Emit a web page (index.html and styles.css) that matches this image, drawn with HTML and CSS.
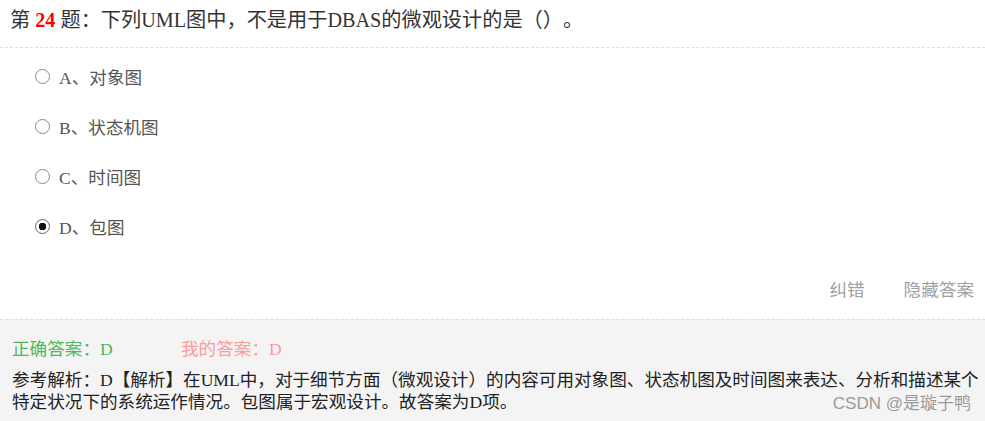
FILE: index.html
```html
<!DOCTYPE html>
<html lang="zh-CN">
<head>
  <meta charset="UTF-8" />
  <title>第24题</title>
  <link rel="stylesheet" href="styles.css">
</head>
<body>

  <div class="question">
    第 <span class="num">24</span> 题：下列UML图中，不是用于DBAS的微观设计的是（）。
  </div>

  <div class="options">
    <label class="option"><input type="radio" name="q24"> A、对象图</label>
    <label class="option"><input type="radio" name="q24"> B、状态机图</label>
    <label class="option"><input type="radio" name="q24"> C、时间图</label>
    <label class="option"><input type="radio" name="q24" checked> D、包图</label>
  </div>

  <div class="actions">
    <span class="action">纠错</span>
    <span class="action">隐藏答案</span>
  </div>

  <div class="answer">
    <div class="result">
      <span class="right">正确答案：D</span>
      <span class="mine">我的答案：D</span>
    </div>
    <div class="analysis"><span>参考解析：D【解析】在UML中，对于细节方面（微观设计）的内容可用对象图、状态机图及时间图来表达、分析和描述某个特定状况下的系统运作情况。包图属于宏观设计。故答案为D项。</span></div>
    <div class="watermark">CSDN @是璇子鸭</div>
  </div>

</body>
</html>
```

FILE: styles.css
```css
body {
  margin: 0;
  padding: 0;
  font-family: "Liberation Serif", "Noto Sans CJK SC", serif;
  background: #fff;
  color: #333;
  height: 421px;
  display: flex;
  flex-direction: column;
  text-spacing-trim: space-all;
}

.question {
  padding: 9px 10px 0;
  height: 48px;
  box-sizing: border-box;
  font-size: 20.2px;
  line-height: 22px;
  color: #333;
  border-bottom: 1px dashed #e0e0e0;
}

.num {
  color: #f00;
  font-weight: bold;
}

.options {
  display: flex;
  flex-direction: column;
  padding: 3px 0 0 35px;
}

.option {
  display: flex;
  align-items: center;
  height: 50px;
  font-size: 17.6px;
  color: #555;
}

.option input {
  appearance: none;
  margin: 0 9px 0 0;
  width: 15px;
  height: 15px;
  border: 1.5px solid #8a8a8a;
  border-radius: 50%;
  background: #fff;
  box-sizing: border-box;
}

.option input:checked {
  border-color: #666;
  background: radial-gradient(circle, #111 0, #111 3.5px, #fff 4px);
}

.actions {
  display: flex;
  justify-content: flex-end;
  gap: 39px;
  padding: 25px 11px 0 0;
  height: 68px;
  box-sizing: border-box;
  font-size: 17.6px;
  color: #a0a0a0;
}

.action {
  font-family: "Noto Sans CJK SC", sans-serif;
}

.answer {
  position: relative;
  flex: 1;
  background: #f4f4f4;
  border-top: 1px dashed #ddd;
  padding: 17px 5px 0 12px;
}

.result {
  display: flex;
  font-size: 17.6px;
  line-height: 24px;
}

.right {
  color: #4cb860;
  width: 169px;
}

.mine {
  color: #ff9a9a;
}

.analysis {
  margin: 8px 0 0;
  font-size: 17.6px;
  line-height: 22px;
  color: #222;
}

.watermark {
  position: absolute;
  right: 14px;
  bottom: 7px;
  font-family: "Liberation Sans", "Noto Sans CJK SC", sans-serif;
  font-size: 17px;
  color: #9a9a9a;
}
```
